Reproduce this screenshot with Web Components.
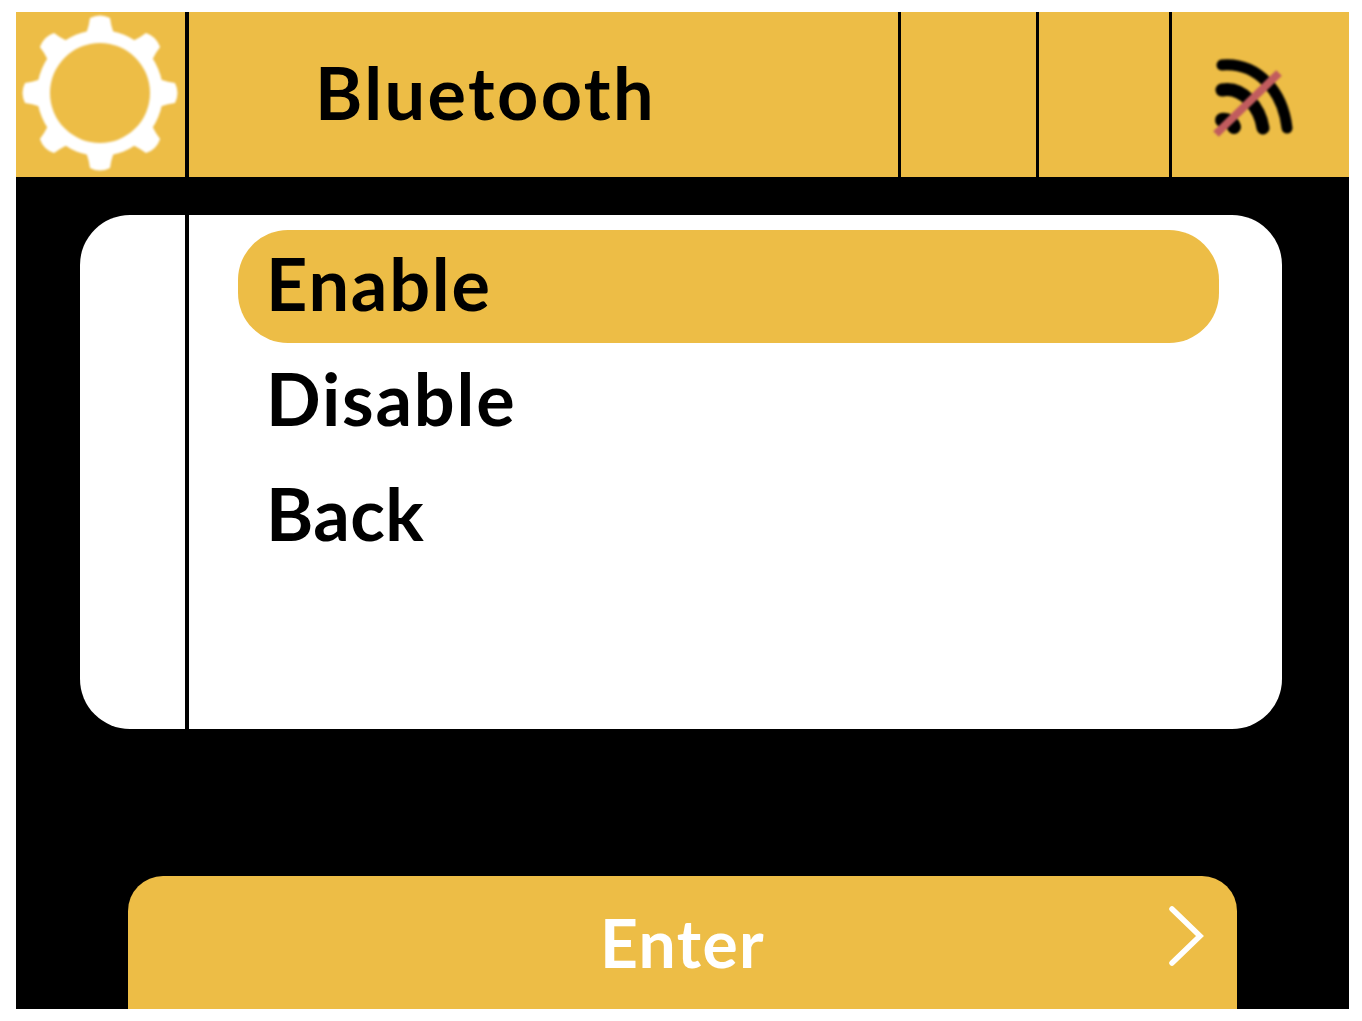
<!DOCTYPE html>
<html>
<head>
<meta charset="utf-8">
<title>Bluetooth</title>
<style>
    html, body {
        margin: 0;
        background: #fff;
    }
    body {
        padding: 12px 13px 12px 16px;
        font-family: "Lato", "Liberation Sans", sans-serif;
    }
</style>
</head>
<body>
<device-screen>
    <top-bar title="Bluetooth"></top-bar>
    <menu-card>
        <menu-row selected>Enable</menu-row>
        <menu-row>Disable</menu-row>
        <menu-row style="letter-spacing: 0.4px">Back</menu-row>
    </menu-card>
    <enter-button>Enter</enter-button>
</device-screen>

<script>
class deviceScreen extends HTMLElement {
    constructor() {
        super();
        this.shadowDOM = this.attachShadow({mode: "open"});
    }

    connectedCallback() {
        this.shadowDOM.innerHTML = `
        <style>
        :host {
            display: flex;
            flex-direction: column;
            width: 1333px;
            height: 997px;
            background: #000;
            overflow: hidden;
        }
        </style>
        <slot></slot>
        `;
    }
}

class topBar extends HTMLElement {
    constructor() {
        super();
        this.shadowDOM = this.attachShadow({mode: "open"});
    }

    connectedCallback() {
        const tooth = "M-18 -53 Q-12 -60 -10 -75 Q0 -80 10 -75 Q12 -60 18 -53 Z";
        const teeth = [0, 45, 90, 135, 180, 225, 270, 315]
            .map(a => `<path d="${tooth}" transform="rotate(${a})"></path>`).join("");
        this.shadowDOM.innerHTML = `
        <style>
        :host {
            display: grid;
            grid-template-columns: 169px 4px 709px 3px 135px 3px 130px 3px 1fr;
            height: 165px;
            background: #edbd46;
        }
        .line {
            background: #000;
        }
        .logo, .status {
            display: flex;
            align-items: center;
            justify-content: center;
        }
        svg {
            filter: blur(0.9px);
        }
        .title {
            display: flex;
            align-items: center;
            padding-left: 126px;
            padding-bottom: 5px;
            font-size: 72px;
            font-weight: 700;
            letter-spacing: 2.4px;
            color: #000;
        }
        </style>
        <div class="logo">
            <svg width="169" height="165" viewBox="0 0 169 165">
                <g fill="#fff" transform="translate(84 81)">
                    <circle r="63"></circle>
                    ${teeth}
                    <circle r="50" fill="#edbd46"></circle>
                </g>
            </svg>
        </div>
        <div class="line"></div>
        <div class="title">${this.getAttribute("title")}</div>
        <div class="line"></div>
        <div></div>
        <div class="line"></div>
        <div></div>
        <div class="line"></div>
        <div class="status">
            <svg width="177" height="165" viewBox="1172 12 177 165">
                <g fill="none" stroke="#000" stroke-linecap="round">
                    <path d="M1222 65 C1258 62 1283 92 1287 128" stroke-width="11"></path>
                    <path d="M1222 90 C1243 86 1260 108 1263 128" stroke-width="13"></path>
                    <path d="M1222 120 C1228 119 1233 123 1234 127" stroke-width="14"></path>
                </g>
                <path d="M1216 134 L1279 73" fill="none" stroke="#c15c5e" stroke-width="8"></path>
            </svg>
        </div>
        `;
    }
}

class menuCard extends HTMLElement {
    constructor() {
        super();
        this.shadowDOM = this.attachShadow({mode: "open"});
    }

    connectedCallback() {
        this.shadowDOM.innerHTML = `
        <style>
        :host {
            display: grid;
            grid-template-columns: 105px 4px 1fr;
            height: 514px;
            margin: 38px 67px 0 64px;
            background: #fff;
            border-radius: 50px;
            overflow: hidden;
        }
        .line {
            background: #000;
        }
        .list {
            display: flex;
            flex-direction: column;
            padding: 15px 63px 0 49px;
        }
        </style>
        <div></div>
        <div class="line"></div>
        <div class="list"><slot></slot></div>
        `;
    }
}

class menuRow extends HTMLElement {
    constructor() {
        super();
        this.shadowDOM = this.attachShadow({mode: "open"});
    }

    connectedCallback() {
        this.shadowDOM.innerHTML = `
        <style>
        :host {
            display: flex;
            align-items: center;
            height: 113px;
            margin-bottom: 2px;
            padding-left: 28px;
            padding-bottom: 7px;
            box-sizing: border-box;
            border-radius: 50px;
            font-size: 72px;
            font-weight: 700;
            letter-spacing: 1.8px;
            color: #000;
        }
        :host([selected]) {
            background: #edbd46;
        }
        </style>
        <slot></slot>
        `;
    }
}

class enterButton extends HTMLElement {
    constructor() {
        super();
        this.shadowDOM = this.attachShadow({mode: "open"});
    }

    connectedCallback() {
        this.shadowDOM.innerHTML = `
        <style>
        :host {
            display: flex;
            align-items: center;
            justify-content: center;
            position: relative;
            height: 133px;
            margin: 147px 112px 0 112px;
            background: #edbd46;
            border-radius: 35px 35px 0 0;
            font-size: 66px;
            font-weight: 700;
            letter-spacing: 1.4px;
            color: #fff;
        }
        svg {
            position: absolute;
            right: 32px;
            top: 30px;
        }
        </style>
        <slot></slot>
        <svg width="36" height="60" viewBox="0 0 36 60">
            <path d="M3 3 L31 30 L3 57" fill="none" stroke="#fff" stroke-width="5.5" stroke-linecap="round" stroke-linejoin="miter"></path>
        </svg>
        `;
    }
}

customElements.define('device-screen', deviceScreen);
customElements.define('top-bar', topBar);
customElements.define('menu-card', menuCard);
customElements.define('menu-row', menuRow);
customElements.define('enter-button', enterButton);
</script>
</body>
</html>
